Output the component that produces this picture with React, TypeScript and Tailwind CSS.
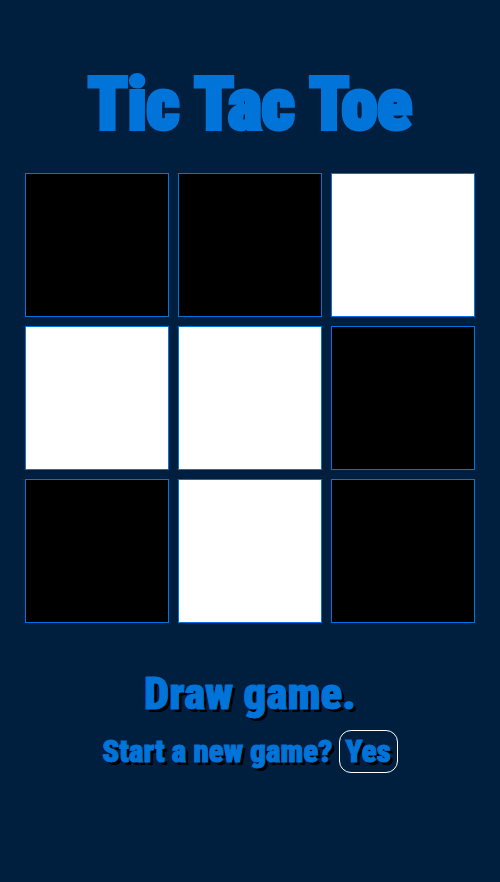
import { useState } from "react";

type Mark = "black" | "white" | null;

const drawnGame: Mark[] = [
  "black", "black", "white",
  "white", "white", "black",
  "black", "white", "black",
];

function Cell({ mark, index, onPlay }: { mark: Mark; index: number; onPlay: () => void }) {
  const fill = mark === "black" ? "bg-black" : mark === "white" ? "bg-white" : "bg-transparent";
  return (
    <button
      type="button"
      aria-label={`Square ${index + 1}`}
      onClick={onPlay}
      className={`aspect-square border border-[#0074d9] ${fill}`}
    />
  );
}

export default function App() {
  const [board, setBoard] = useState<Mark[]>(drawnGame);
  const full = board.every((mark) => mark !== null);

  const play = (index: number) => {
    if (board[index]) return;
    const turn: Mark = board.filter(Boolean).length % 2 === 0 ? "black" : "white";
    setBoard(board.map((mark, i) => (i === index ? turn : mark)));
  };

  return (
    <main className="flex min-h-screen flex-col items-center bg-[#001f3f] pt-[61px] font-[Impact,'Roboto_Condensed',Roboto,sans-serif] text-[#0074d9]">
      <h1 className="text-[72px] leading-[88px] font-black whitespace-nowrap [-webkit-text-stroke:4px_#0074d9]">
        Tic Tac Toe
      </h1>
      <div className="mt-6 grid w-[90%] grid-cols-3 gap-[9px]">
        {board.map((mark, i) => (
          <Cell key={i} mark={mark} index={i} onPlay={() => play(i)} />
        ))}
      </div>
      {full && (
        <section className="mt-[41px] flex flex-col items-center font-black text-shadow-[3px_3px_0_#000] [-webkit-text-stroke:1px_#0074d9]">
          <h2 className="text-[45px] leading-[60px]">Draw game.</h2>
          <div className="mt-[6px] flex items-center gap-[6px] text-[31px] leading-[41px]">
            <p>Start a new game?</p>
            <button
              type="button"
              onClick={() => setBoard(Array(9).fill(null))}
              className="rounded-xl border border-white px-[6px] text-shadow-[3px_3px_0_#000]"
            >
              Yes
            </button>
          </div>
        </section>
      )}
    </main>
  );
}
